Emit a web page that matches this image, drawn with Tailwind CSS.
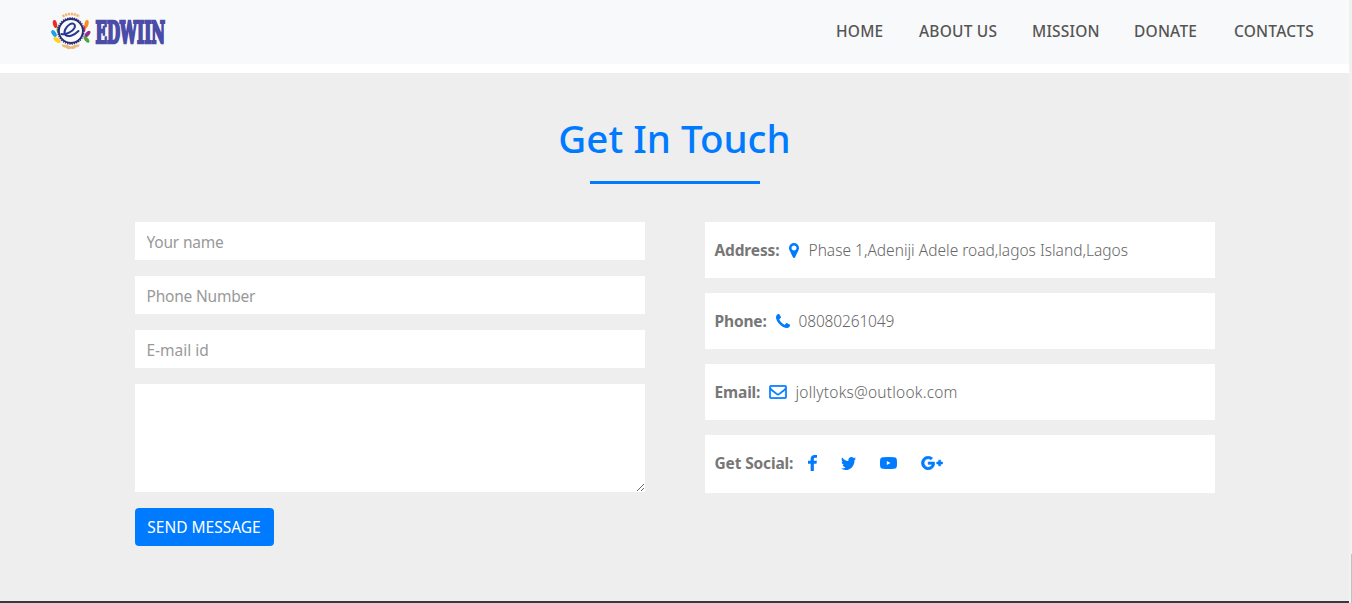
<!DOCTYPE html>
<html lang="en">
<head>
<meta charset="utf-8">
<title>Edwiin - Contacts</title>
<script src="https://cdn.jsdelivr.net/npm/@tailwindcss/browser@4"></script>
</head>
<body class="flex h-[603px] overflow-hidden bg-white font-['Noto_Sans','Open_Sans',sans-serif] text-[16px]">
<div class="flex w-[1349px] flex-col">
  <header class="flex h-16 shrink-0 items-center justify-between bg-[#f8f9fa] pl-[50px] pr-[33px]">
    <a href="#" aria-label="Edwiin">
      <svg class="block overflow-visible" width="124" height="44" viewBox="50 10 124 44">
        <g>
          <ellipse cx="55" cy="24" rx="2" ry="4" transform="rotate(-14 55 24)" fill="#ee2a24"/>
          <ellipse cx="54" cy="33.500" rx="2" ry="3.800" transform="rotate(-35 54 33.500)" fill="#18a0e8"/>
          <ellipse cx="57" cy="40" rx="2" ry="4.200" transform="rotate(-55 57 40)" fill="#ffd21c"/>
          <ellipse cx="58" cy="29" rx="1.400" ry="3.200" transform="rotate(8 58 29)" fill="#68b33f"/>
          <ellipse cx="86.500" cy="24" rx="2" ry="4" transform="rotate(14 86.500 24)" fill="#ff8b20"/>
          <ellipse cx="87.500" cy="34" rx="2" ry="3.800" transform="rotate(40 87.500 34)" fill="#922d91"/>
          <ellipse cx="86.500" cy="39.500" rx="1.900" ry="3.800" transform="rotate(-40 86.500 39.500)" fill="#4ca835"/>
          <ellipse cx="84.500" cy="28.500" rx="1.200" ry="2.800" fill="#e84435"/>
        </g>
        <path d="M62.500 16.500Q71 11.500 79.500 16.500" fill="none" stroke="#efb678" stroke-width="2.600" stroke-dasharray="2.200 .7"/>
        <path d="M61.500 44.500q5-.5 9.300 2q4.500-2.500 9.200-2q-1 3-4 2.800q-1 2-4.700 1.500q-4.300 1-5.300-1q-3.500 0-4.500-3.300z" fill="#edb97c"/>
        <circle cx="70.900" cy="31" r="12" fill="#f8f9fa" stroke="#292b73" stroke-width="1.800"/>
        <circle cx="70.900" cy="31" r="13.100" fill="none" stroke="#292b73" stroke-width="1.400" stroke-dasharray="1.300 1"/>
        <path d="M61.500 34c5 1 11-2.500 13-6c1.500-4-1.500-5.500-5-3.500c-4 2.500-6.500 8-4 10.500c3 2.500 9 0 13-4" fill="none" stroke="#283892" stroke-width="2" stroke-linecap="round"/>
        <text x="95.500" y="42.500" textLength="69.500" lengthAdjust="spacingAndGlyphs" font-family="DejaVu Serif, serif" font-size="30" font-weight="bold" fill="#4b4ba8" stroke="#4b4ba8" stroke-width="2.600">EDWIIN</text>
      </svg>
    </a>
    <nav class="flex whitespace-nowrap text-[15.500px] font-medium tracking-[.2px] text-[#555]">
      <a href="#" class="w-[83px]">HOME</a>
      <a href="#" class="w-[113px]">ABOUT US</a>
      <a href="#" class="w-[102px]">MISSION</a>
      <a href="#" class="w-[100px]">DONATE</a>
      <a href="#" class="w-[82px]">CONTACTS</a>
    </nav>
  </header>
  <main class="mt-[9px] flex h-[528px] shrink-0 flex-col items-center bg-[#eee]">
    <h1 class="mt-[41px] h-[48px] whitespace-nowrap text-[38.500px] font-medium leading-[48px] text-[#007bff]">Get In Touch</h1>
    <div class="mt-[19px] h-[3px] w-[170px] bg-[#007bff]"></div>
    <div class="mt-[38px] flex w-[1080px] gap-[60px]">
      <form class="flex w-[510px] flex-col items-start gap-4 text-[15.500px] tracking-[-.2px]">
        <input class="h-[38px] w-full bg-white px-3 pt-[2px] placeholder:text-[#999]" placeholder="Your name">
        <input class="h-[38px] w-full bg-white px-3 pt-[2px] placeholder:text-[#999]" placeholder="Phone Number">
        <input class="h-[38px] w-full bg-white px-3 pt-[2px] tracking-normal placeholder:text-[#999]" placeholder="E-mail id">
        <textarea class="block h-[108px] w-full resize bg-white"></textarea>
        <button type="button" class="h-[38px] w-[139px] whitespace-nowrap rounded bg-[#007bff] pt-[2px] tracking-normal text-white">SEND MESSAGE</button>
      </form>
      <div class="flex w-[510px] flex-col gap-[15px] whitespace-nowrap text-[15.500px] font-light text-[#666]">
        <div class="flex h-14 items-center bg-white pl-[10px]">
          <b class="w-[74px] pt-[2px] font-bold tracking-[-.15px] text-[#777]">Address:</b>
          <svg class="h-[15px] w-[10px] fill-[#007bff]" viewBox="384 128 1024 1536"><path d="M1152 640q0-106-75-181t-181-75-181 75-75 181 75 181 181 75 181-75 75-181zm256 0q0 109-33 179l-364 774q-16 33-47.500 52t-67.500 19-67.500-19-46.500-52l-365-774q-33-70-33-179 0-212 150-362t362-150 362 150 150 362z"/></svg>
          <span class="ml-[10px] pt-[2px]">Phase 1,Adeniji Adele road,lagos Island,Lagos</span>
        </div>
        <div class="flex h-14 items-center bg-white pl-[10px]">
          <b class="w-[61px] pt-[2px] font-bold tracking-[-.15px] text-[#777]">Phone:</b>
          <svg class="h-[14px] w-[14px] fill-[#007bff]" viewBox="192 128 1408 1408"><path d="M1600 1240q0 27-10 70.500t-21 68.500q-21 50-122 106-94 51-186 51-27 0-52.500-3.500t-57.500-12.500-47.500-14.500-55.500-20.500-49-18q-98-35-175-83-128-79-264.500-215.500t-215.500-264.500q-48-77-83-175-3-9-18-49t-20.500-55.500-14.500-47.500-12.500-57.500-3.500-52.500q0-92 51-186 56-101 106-122 25-11 68.500-21t70.500-10q14 0 21 3 18 6 53 76 11 19 30 54t35 63.500 31 53.500q3 4 17.500 25t21.500 35.500 7 28.500q0 20-28.500 50t-62 55-62 53-28.500 46q0 9 5 22.500t8.500 20.500 14 24 11.500 19q76 137 174 235t235 174q2 1 19 11.500t24 14 20.500 8.500 22.500 5q18 0 46-28.500t53-62 55-62 50-28.500q14 0 28.500 7t35.500 21.500 25 17.500q25 15 53.500 31t63.500 35 54 30q70 35 76 53 3 7 3 21z"/></svg>
          <span class="ml-[9px] pt-[2px] tracking-[-.15px]">08080261049</span>
        </div>
        <div class="flex h-14 items-center bg-white pl-[10px]">
          <b class="w-[54px] pt-[2px] font-bold tracking-[-.15px] text-[#777]">Email:</b>
          <svg class="h-[14px] w-[18px] fill-[#007bff] stroke-[#007bff]" stroke-width="70" viewBox="-35 221 1862 1478" preserveAspectRatio="none"><path d="M1664 1504v-768q-32 36-69 66-268 206-426 338-51 43-83 67t-86.500 48.500-102.500 24.500h-2q-48 0-102.500-24.500t-86.500-48.500-83-67q-158-132-426-338-37-30-69-66v768q0 13 9.500 22.500t22.500 9.500h1472q13 0 22.500-9.500t9.500-22.500zm0-1051v-24.500l-.5-13-3-12.500-5.500-9-9-7.500-14-2.500h-1472q-13 0-22.500 9.500t-9.500 22.500q0 168 147 284 193 152 401 317 6 5 35 29.500t46 37.500 44.500 31.500 50.500 27.500 43 9h2q20 0 43-9t50.500-27.500 44.500-31.500 46-37.500 35-29.500q208-165 401-317 54-43 100.500-115.500t46.500-131.500zm128-37v1088q0 66-47 113t-113 47h-1472q-66 0-113-47t-47-113v-1088q0-66 47-113t113-47h1472q66 0 113 47t47 113z"/></svg>
          <span class="ml-[9px] pt-[2px] tracking-[.21px]">jollytoks@outlook.com</span>
        </div>
        <div class="flex h-[58px] items-center bg-white pl-[10px]">
          <b class="w-[93px] font-bold tracking-[-.15px] text-[#777]">Get Social:</b>
          <svg class="mb-[2px] h-[16px] w-[9px] fill-[#007bff]" viewBox="479 0 864 1664" preserveAspectRatio="none"><path d="M1343 12v264h-157q-86 0-116 36t-30 108v189h293l-39 296h-254v759h-306v-759h-255v-296h255v-218q0-186 104-288.500t277-102.500q147 0 228 12z"/></svg>
          <svg class="mb-px ml-[24px] h-[13px] w-[15px] fill-[#007bff]" viewBox="108 256 1576 1280" preserveAspectRatio="none"><path d="M1684 408q-67 98-162 167 1 14 1 42 0 130-38 259.500t-115.500 248.500-184.500 210.500-258 146-323 54.500q-271 0-496-145 35 4 78 4 225 0 401-138-105-2-188-64.500t-114-159.500q33 5 61 5 43 0 85-11-112-23-185.500-111.500t-73.500-205.500v-4q68 38 146 41-66-44-105-115t-39-154q0-88 44-163 121 149 294.500 238.500t371.500 99.500q-8-38-8-74 0-134 94.500-228.500t228.500-94.500q140 0 236 102 109-21 205-78-37 115-142 178 93-10 186-50z"/></svg>
          <svg class="mb-[2px] ml-[24px] h-[12px] w-[17px]" viewBox="0 0 17 12"><path fill="#007bff" d="M3 .2Q8.500-.2 14 .2Q16.800.4 16.900 3.200Q17.100 6 16.900 8.800Q16.800 11.600 14 11.800Q8.500 12.200 3 11.800Q.2 11.600.1 8.800Q-.1 6 .1 3.200Q.2.4 3 .2Z"/><path fill="#fff" d="M6.800 4L10.500 6L6.800 8z"/></svg>
          <svg class="mb-[2px] ml-[24px] h-[14px] w-[22px] fill-[#007bff] stroke-[#007bff]" stroke-width="70" viewBox="-35 128 2374 1536"><path d="M1437 913q0 208-87 370.500t-248 254-369 91.500q-149 0-285-58t-234-156-156-234-58-285 58-285 156-234 234-156 285-58q286 0 491 192l-199 191q-117-113-292-113-123 0-227.500 62t-165.500 168.500-61 232.500 61 232.500 165.500 168.500 227.500 62q83 0 152.500-23t114.500-57.500 78.500-78.500 49-83 21.500-74h-416v-252h692q12 63 12 122zm867-122v210h-209v209h-210v-209h-209v-210h209v-209h210v209h209z"/></svg>
        </div>
      </div>
    </div>
  </main>
  <footer class="h-[2px] shrink-0 bg-[#343a40]"></footer>
</div>
<div class="flex w-[3px] flex-col items-end bg-[#f1f1f1]"><div class="mt-[554px] h-[49px] w-px bg-[#c1c1c1]"></div></div>
</body>
</html>
